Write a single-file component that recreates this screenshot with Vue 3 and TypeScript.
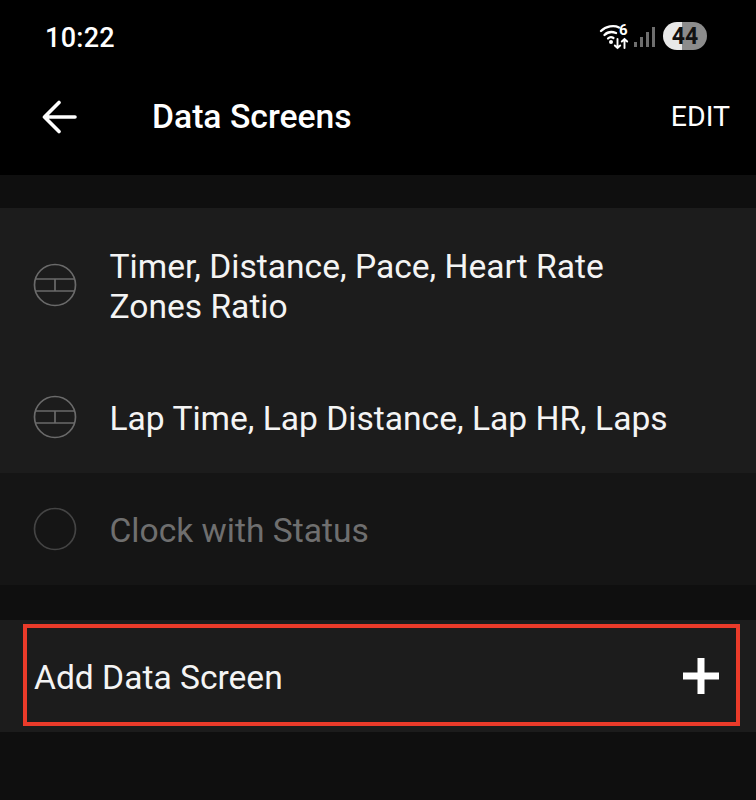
<script setup lang="ts">
interface ScreenRow {
  label: string[];
  disabled?: boolean;
}

const rows: ScreenRow[] = [
  { label: ['Timer, Distance, Pace, Heart Rate', 'Zones Ratio'] },
  { label: ['Lap Time, Lap Distance, Lap HR, Laps'] },
  { label: ['Clock with Status'], disabled: true },
];
</script>

<template>
  <div class="page">
    <div class="status-bar">
      <span class="clock">10:22</span>
      <div class="status-icons">
        <svg class="wifi" width="32" height="28" viewBox="0 0 32 28" fill="none" stroke="#fff" stroke-linecap="round">
          <path d="M2 9C7 4 15 3 20 5.500" stroke-width="2.400" />
          <path d="M5.500 13C8.500 10 13 9.500 17 11" stroke-width="2.400" />
          <path d="M9 16.500C10.500 15 13 15 14.500 16" stroke-width="2.200" />
          <circle cx="12" cy="20" r="2" fill="#fff" stroke="none" />
          <path d="M18.500 17V26M15.800 23.500L18.500 26L21.200 23.500" stroke-width="1.900" />
          <path d="M25.500 26V17M22.800 19.500L25.500 17L28.200 19.500" stroke-width="1.900" />
          <text x="20" y="13" class="wifi-six">6</text>
        </svg>
        <div class="signal">
          <i v-for="h in [5, 10, 15, 20]" :key="h" :style="{ height: h + 'px' }"></i>
        </div>
        <div class="battery"><span>44</span></div>
      </div>
    </div>

    <header class="app-bar">
      <svg class="back" width="36" height="36" viewBox="0 0 36 36" fill="none" stroke="#fff" stroke-width="3.600" stroke-linecap="round" stroke-linejoin="round">
        <path d="M33 18H3M17 3.500L2.500 18L17 32.500" />
      </svg>
      <h1 class="title">Data Screens</h1>
      <span class="edit">EDIT</span>
    </header>

    <div class="spacer"></div>

    <ul class="list">
      <li
        v-for="row in rows"
        :key="row.label[0]"
        class="row"
        :class="{ 'row--disabled': row.disabled, 'row--tall': row.label.length > 1 }"
      >
        <svg class="screen-icon" width="44" height="44" viewBox="0 0 44 44" fill="none" stroke-width="1.700">
          <circle cx="22" cy="22" r="20.500" />
          <template v-if="!row.disabled">
            <path d="M2.500 16H41.500M2.500 28H41.500M22 16V28" />
          </template>
        </svg>
        <div class="row-text">
          <div v-for="line in row.label" :key="line">{{ line }}</div>
        </div>
      </li>
    </ul>

    <div class="spacer spacer--wide"></div>

    <div class="add-row">
      <span class="add-label">Add Data Screen</span>
      <svg class="plus" width="36" height="36" viewBox="0 0 36 36" fill="#fff">
        <rect x="14.500" y="0" width="7" height="36" />
        <rect x="0" y="14.500" width="36" height="7" />
      </svg>
      <div class="highlight"></div>
    </div>
  </div>
</template>

<style scoped>
.page {
  width: 756px;
  height: 800px;
  overflow: hidden;
  background: #0f0f0f;
  color: #f4f4f4;
  font-family: Roboto, "Liberation Sans", sans-serif;
}

.status-bar {
  height: 76px;
  padding: 0 49px 0 45px;
  background: #000;
  display: flex;
  align-items: center;
  justify-content: space-between;
}

.clock {
  color: #fff;
  font-size: 27px;
  font-weight: 500;
  letter-spacing: 0.3px;
}

.status-icons {
  display: flex;
  align-items: center;
  margin-top: -4px;
}

.wifi {
  margin-right: 3px;
}

.wifi-six {
  fill: #fff;
  stroke: none;
  font-size: 15px;
  font-weight: 700;
}

.signal {
  display: flex;
  align-items: flex-end;
  gap: 3px;
  height: 20px;
  margin-top: 2px;
  margin-right: 8px;
}

.signal i {
  width: 3px;
  background: #6e6e6e;
}

.battery {
  width: 44px;
  height: 28px;
  border-radius: 14px;
  background: linear-gradient(90deg, #e8e8e8 0, #e8e8e8 43%, #8c8c8c 43%, #8c8c8c 100%);
  color: #111;
  font-size: 23px;
  font-weight: 700;
  display: flex;
  align-items: center;
  justify-content: center;
}

.app-bar {
  height: 99px;
  background: #000;
  display: flex;
  align-items: center;
  padding: 0 26px 18px 42px;
  box-sizing: border-box;
}

.back {
  flex-shrink: 0;
  margin-top: 1px;
}

.title {
  margin: 0 0 0 74px;
  flex: 1;
  color: #fff;
  font-size: 33.7px;
  font-weight: 500;
}

.edit {
  color: #fff;
  font-size: 28.500px;
}

.spacer {
  height: 33px;
}

.spacer--wide {
  height: 35px;
}

.list {
  margin: 0;
  padding: 0;
  list-style: none;
}

.row {
  height: 112px;
  padding-left: 33px;
  background: #1c1c1c;
  display: flex;
  align-items: center;
  font-size: 33.6px;
  line-height: 40px;
}

.row--tall {
  height: 153px;
}

.row--disabled {
  background: #151515;
  color: #6f6f6f;
}

.screen-icon {
  flex-shrink: 0;
  stroke: #6a6a6a;
}

.row--disabled .screen-icon {
  stroke: #444;
}

.row-text {
  margin-left: 32.500px;
  padding-top: 4px;
}

.add-row {
  position: relative;
  height: 112px;
  padding: 0 37px 0 34px;
  background: #1c1c1c;
  display: flex;
  align-items: center;
  justify-content: space-between;
  font-size: 33.6px;
}

.add-label {
  padding-top: 3px;
}

.highlight {
  position: absolute;
  left: 23px;
  top: 4px;
  width: 717px;
  height: 102px;
  box-sizing: border-box;
  border: 4px solid #ea3b2a;
}
</style>
